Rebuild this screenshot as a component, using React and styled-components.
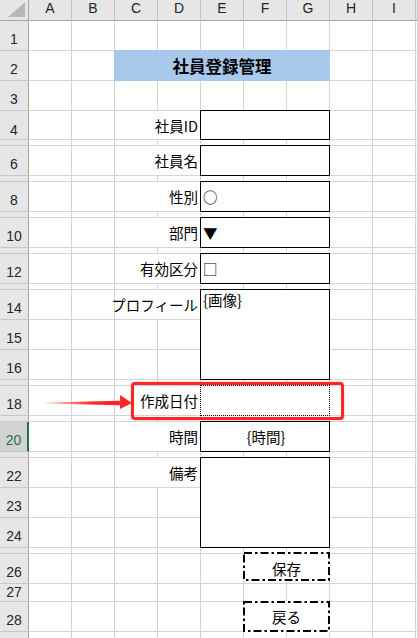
import React from "react";
import styled, { createGlobalStyle, css } from "styled-components";

const GlobalStyle = createGlobalStyle`
  html, body {
    margin: 0;
    padding: 0;
    background: #fff;
    overflow: hidden;
  }
`;

const COLUMNS = ["A", "B", "C", "D", "E", "F", "G", "H", "I", ""];

// [row number, height in px incl. grid line]
const ROWS = [
  [1, 30], [2, 30], [3, 30], [4, 29], [5, 6], [6, 30], [7, 6], [8, 30],
  [9, 6], [10, 30], [11, 6], [12, 30], [13, 6], [14, 30], [15, 30], [16, 30],
  [17, 6], [18, 30], [19, 6], [20, 30], [21, 6], [22, 30], [23, 30], [24, 30],
  [25, 6], [26, 30], [27, 18], [28, 30], [29, 30],
];

// the last row only peeks in at the bottom edge, its number stays out of view
const LAST_VISIBLE_LABEL = 28;

const FIELDS = [
  { row: 4, label: "社員ID" },
  { row: 6, label: "社員名" },
  { row: 8, label: "性別", value: "○" },
  { row: 10, label: "部門", value: "▼" },
  { row: 12, label: "有効区分", value: "□" },
  { row: 14, span: 3, label: "プロフィール", value: "{画像}", top: true },
  { row: 18, label: "作成日付", dotted: true },
  { row: 20, label: "時間", value: "{時間}", center: true },
  { row: 22, span: 3, label: "備考" },
];

const BUTTONS = [
  { row: 26, label: "保存", height: 29, lift: true },
  { row: 28, label: "戻る", height: 31 },
];

const gridRow = (r) => r + 1;

const App = () => {
  const rowTemplate = `21px ${ROWS.map(([, h]) => `${h}px`).join(" ")}`;

  return (
    <>
      <GlobalStyle />
      <Sheet $rows={rowTemplate}>
        <Corner />
        {COLUMNS.map((c, i) => (
          <ColHead key={`h${i}`} $col={i + 2}>
            {c}
          </ColHead>
        ))}

        {ROWS.map(([n, h]) => (
          <RowHead
            key={`r${n}`}
            $row={gridRow(n)}
            $short={h < 30}
            $active={n === 20}
          >
            {h >= 18 && n <= LAST_VISIBLE_LABEL ? n : ""}
          </RowHead>
        ))}

        {ROWS.map(([n]) =>
          COLUMNS.map((_, i) => (
            <Cell key={`c${n}-${i}`} $row={gridRow(n)} $col={i + 2} />
          ))
        )}

        <Title $row={gridRow(2)}>社員登録管理</Title>

        {FIELDS.map((f) => (
          <React.Fragment key={f.row}>
            <Label $row={gridRow(f.row)}>{f.label}</Label>
            <Box
              $row={gridRow(f.row)}
              $span={f.span || 1}
              $dotted={f.dotted}
              $top={f.top}
              $center={f.center}
            >
              {f.value}
            </Box>
          </React.Fragment>
        ))}

        {BUTTONS.map((b) => (
          <SheetButton
            key={b.label}
            $row={gridRow(b.row)}
            $height={b.height}
            $lift={b.lift}
          >
            <DashFrame width="87" height={b.height}>
              <rect
                x="1"
                y="1"
                width="85"
                height={b.height - 2}
                fill="none"
                stroke="#000"
                strokeWidth="2"
                strokeDasharray="8 3 2.5 3"
              />
            </DashFrame>
            {b.label}
          </SheetButton>
        ))}

        <Highlight />
        <Arrow width="90" height="18" viewBox="0 0 90 18">
          <defs>
            <linearGradient id="tail" x1="0" x2="1" y1="0" y2="0">
              <stop offset="0" stopColor="#ff2525" stopOpacity="0.15" />
              <stop offset="0.55" stopColor="#ff2525" stopOpacity="1" />
            </linearGradient>
          </defs>
          <polygon
            points="1,9.6 76,7.8 76,2 88,10 76,16 76,12.2 1,10.4"
            fill="url(#tail)"
          />
        </Arrow>
      </Sheet>
    </>
  );
};

export default App;

const Sheet = styled.div`
  position: relative;
  display: grid;
  grid-template-columns: 29px repeat(9, 43px) 1fr;
  grid-template-rows: ${(p) => p.$rows};
  height: 638px;
  overflow: hidden;
  font-family: "Noto Sans CJK JP", "Noto Sans", sans-serif;
  color: #000;
`;

const Corner = styled.div`
  position: relative;
  grid-row: 1;
  grid-column: 1;
  background: #e6e6e6;
  border-right: 1px solid #a6a6a6;
  border-bottom: 1px solid #a6a6a6;

  &::after {
    content: "";
    position: absolute;
    right: 3px;
    bottom: 3px;
    width: 0;
    height: 0;
    border-left: 17px solid transparent;
    border-bottom: 15px solid #b8b8b8;
  }
`;

const ColHead = styled.div`
  grid-row: 1;
  grid-column: ${(p) => p.$col};
  box-sizing: border-box;
  background: #e6e6e6;
  border-right: 1px solid #c4c4c4;
  border-bottom: 1px solid #a6a6a6;
  text-align: center;
  font-family: "Liberation Sans", Arial, sans-serif;
  font-size: 14px;
  line-height: 16px;
  color: #262626;
`;

const RowHead = styled.div`
  grid-column: 1;
  grid-row: ${(p) => p.$row};
  box-sizing: border-box;
  display: flex;
  align-items: flex-end;
  justify-content: center;
  overflow: hidden;
  padding-bottom: ${(p) => (p.$short ? "2px" : "3px")};
  background: #e6e6e6;
  border-right: 1px solid #a6a6a6;
  border-bottom: 1px solid #c8c8c8;
  font-family: "Liberation Sans", Arial, sans-serif;
  font-size: 14px;
  line-height: ${(p) => (p.$short ? "14px" : "16px")};
  color: #262626;

  ${(p) =>
    p.$active &&
    css`
      background: #d2d2d2;
      border-right: 2px solid #217346;
      color: #217346;
    `}
`;

const Cell = styled.div`
  grid-row: ${(p) => p.$row};
  grid-column: ${(p) => p.$col};
  box-sizing: border-box;
  border-right: 1px solid #d4d4d4;
  border-bottom: 1px solid #d4d4d4;
`;

const Title = styled.div`
  grid-row: ${(p) => p.$row};
  grid-column: 4 / 9;
  margin: -1px 0 0 -1px;
  display: flex;
  align-items: center;
  justify-content: center;
  background: #a8c9ec;
  font-size: 16.5px;
  font-weight: 700;
`;

const Label = styled.div`
  grid-row: ${(p) => p.$row};
  grid-column: 4 / 6;
  box-sizing: border-box;
  display: flex;
  align-items: center;
  justify-content: flex-end;
  padding-right: 2px;
  background: #fff;
  border-right: 1px solid #d4d4d4;
  border-bottom: 1px solid #d4d4d4;
  font-size: 14.5px;
  white-space: nowrap;
`;

const Box = styled.div`
  grid-row: ${(p) => p.$row} / span ${(p) => p.$span};
  grid-column: 6 / 9;
  margin: -1px 0 0 -1px;
  box-sizing: border-box;
  display: flex;
  align-items: ${(p) => (p.$top ? "flex-start" : "center")};
  justify-content: ${(p) => (p.$center ? "center" : "flex-start")};
  padding: ${(p) => (p.$top ? "1px 0 0 2px" : "0 0 0 2px")};
  background: #fff;
  border: 1px ${(p) => (p.$dotted ? "dotted" : "solid")} #000;
  font-size: 14.5px;
  line-height: 18px;
  white-space: nowrap;
`;

const SheetButton = styled.div`
  position: relative;
  grid-row: ${(p) => p.$row};
  grid-column: 7 / 9;
  align-self: start;
  height: ${(p) => p.$height}px;
  margin: ${(p) => (p.$lift ? "-2px" : "-1px")} 0 0 -1px;
  display: flex;
  align-items: center;
  justify-content: center;
  padding-top: ${(p) => (p.$lift ? "3px" : "0")};
  box-sizing: border-box;
  background: #fff;
  font-size: 14.5px;
`;

const DashFrame = styled.svg`
  position: absolute;
  left: 0;
  top: 0;
`;

const Highlight = styled.div`
  position: absolute;
  left: 131px;
  top: 382px;
  width: 213px;
  height: 38px;
  box-sizing: border-box;
  border: 3px solid #ff2525;
  border-radius: 4px;
  box-shadow: 0 0 2px rgba(255, 40, 40, 0.5);
  pointer-events: none;
`;

const Arrow = styled.svg`
  position: absolute;
  left: 44px;
  top: 393px;
  pointer-events: none;
`;
